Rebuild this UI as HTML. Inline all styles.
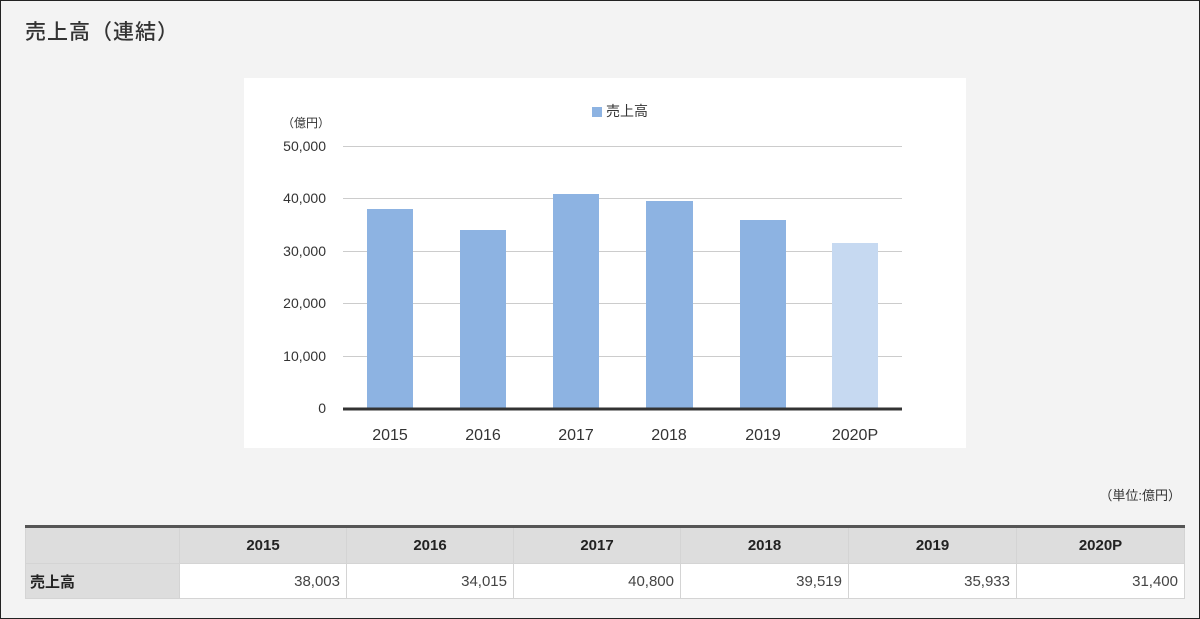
<!DOCTYPE html><html><head><meta charset="utf-8"><style>
*{margin:0;padding:0;box-sizing:border-box}
body{width:1200px;height:619px;background:#f3f3f3;border:1px solid #222;position:relative;overflow:hidden;font-family:"Liberation Sans","Noto Sans CJK JP",sans-serif;color:#222}
h1{position:absolute;left:24px;top:15px;font-size:21px;font-weight:500;color:#333;letter-spacing:1px}
.chart{position:absolute;left:243px;top:77px;width:722px;height:370px;background:#fff}
.unit{position:absolute;right:18px;top:484px;font-size:13px;color:#333}
table{position:absolute;left:24px;top:524px;width:1160px;border-collapse:collapse;border-top:3px solid #555;font-size:15px}
td,th{border:1px solid #d4d4d4}
th{background:#ddd;height:37px;font-weight:bold;text-align:center}
td{height:35px;background:#fff;text-align:right;padding-right:6px;color:#444}
td.h{background:#ddd;text-align:left;padding-left:4px;font-weight:bold;color:#222}
</style></head><body>
<h1>売上高（連結）</h1>
<div class="chart"><svg width="722" height="370" font-family="Liberation Sans,Noto Sans CJK JP,sans-serif">
<g stroke="#ccc" stroke-width="1">
<line x1="99" x2="658" y1="68.5" y2="68.5"/><line x1="99" x2="658" y1="120.5" y2="120.5"/><line x1="99" x2="658" y1="173.5" y2="173.5"/><line x1="99" x2="658" y1="225.5" y2="225.5"/><line x1="99" x2="658" y1="278.5" y2="278.5"/></g>
<g fill="#8db3e2">
<rect x="123" y="131" width="46" height="199"/><rect x="216" y="152" width="46" height="178"/><rect x="309" y="116" width="46" height="214"/><rect x="402" y="123" width="47" height="207"/><rect x="496" y="142" width="46" height="188"/></g>
<rect x="588" y="165" width="46" height="165" fill="#c6d9f1"/>
<line x1="99" x2="658" y1="331" y2="331" stroke="#333" stroke-width="3"/>
<g font-size="14" fill="#333" text-anchor="end">
<text x="82" y="73">50,000</text><text x="82" y="125">40,000</text><text x="82" y="178">30,000</text><text x="82" y="230">20,000</text><text x="82" y="283">10,000</text><text x="82" y="335">0</text></g>
<text x="86" y="49" font-size="12" fill="#333" text-anchor="end">（億円）</text>
<g font-size="16" fill="#333" text-anchor="middle">
<text x="146" y="362">2015</text><text x="239" y="362">2016</text><text x="332" y="362">2017</text><text x="425" y="362">2018</text><text x="519" y="362">2019</text><text x="611" y="362">2020P</text></g>
<rect x="348" y="29" width="10" height="10" fill="#8db3e2"/>
<text x="362" y="38" font-size="14" fill="#333">売上高</text>
</svg></div>
<div class="unit">（単位:億円）</div>
<table><tr><th style="width:154px"></th><th style="width:167px">2015</th><th style="width:167px">2016</th><th style="width:167px">2017</th><th style="width:168px">2018</th><th style="width:168px">2019</th><th>2020P</th></tr>
<tr><td class="h">売上高</td><td>38,003</td><td>34,015</td><td>40,800</td><td>39,519</td><td>35,933</td><td>31,400</td></tr></table>
</body></html>
